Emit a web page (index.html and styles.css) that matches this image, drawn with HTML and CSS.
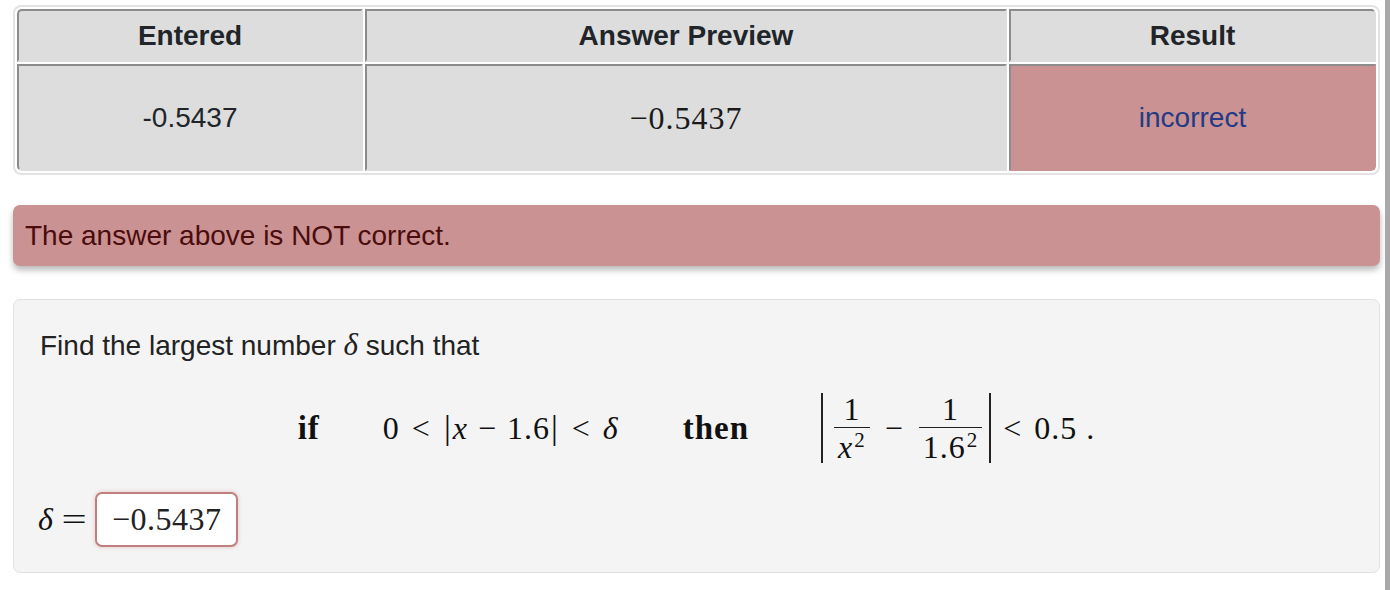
FILE: index.html
```html
<!DOCTYPE html>
<html>
<head>
<meta charset="utf-8">
<link rel="stylesheet" href="styles.css">
</head>
<body>
<div class="page">
  <main class="content">
    <div class="results-wrap">
      <table class="results">
        <thead>
          <tr><th class="c1">Entered</th><th class="c2">Answer Preview</th><th class="c3">Result</th></tr>
        </thead>
        <tbody>
          <tr><td>-0.5437</td><td class="math-cell">−0.5437</td><td class="incorrect">incorrect</td></tr>
        </tbody>
      </table>
    </div>

    <div class="alert">The answer above is NOT correct.</div>

    <div class="problem">
      <p class="prompt">Find the largest number <i class="m-inline">δ</i> such that</p>
      <div class="display">
        <span class="kw kw-if">if</span>
        <span class="expr">0<span class="rel">&lt;</span><span class="bar">|</span><i>x</i><span class="bin">−</span>1.6<span class="bar">|</span><span class="rel">&lt;</span><i>δ</i></span>
        <span class="kw kw-then">then</span>
        <span class="expr">
          <span class="abs">
            <span class="frac"><span class="num">1</span><span class="den"><i>x</i><sup>2</sup></span></span>
            <span class="bin">−</span>
            <span class="frac"><span class="num">1</span><span class="den">1.6<sup>2</sup></span></span>
          </span>
          <span class="rel">&lt;</span>0.5<span class="dot">.</span>
        </span>
      </div>
      <div class="answer-row">
        <span class="ans-label"><i>δ</i><span class="eq">=</span></span>
        <span class="answer-box">−0.5437</span>
      </div>
    </div>
  </main>
  <div class="scroll-strip"></div>
</div>
</body>
</html>
```

FILE: styles.css
```css
html, body {
  margin: 0;
  padding: 0;
  background: #ffffff;
}

body {
  font-family: "Liberation Sans", Arial, sans-serif;
  font-size: 28px;
  color: #212529;
}

.page {
  display: flex;
  width: 1390px;
  height: 590px;
  overflow: hidden;
}

.content {
  flex: 1;
  padding: 5px 5px 0 13px;
  min-width: 0;
}

.scroll-strip {
  width: 5px;
  background: #a9a9a9;
  flex: none;
}

/* results table */
.results-wrap {
  border: 2px solid #e3e3e3;
  border-radius: 8px;
}

.results {
  width: 100%;
  border-collapse: separate;
  border-spacing: 2px;
  table-layout: fixed;
}

.results th,
.results td {
  background: #dddddd;
  border-style: solid;
  border-width: 2px;
  border-color: #8c8c8c #dddddd #dddddd #8c8c8c;
  text-align: center;
  padding: 0;
  box-sizing: border-box;
}

.results th {
  height: 53px;
  font-weight: bold;
  color: #212529;
  line-height: 30px;
}

.results td {
  height: 107px;
  line-height: 30px;
}

.results th.c1 { width: 346px; border-top-left-radius: 5px; }
.results th.c2 { width: 642px; }
.results th.c3 { border-top-right-radius: 5px; }

.results tbody td:first-child { border-bottom-left-radius: 5px; }

.results td.math-cell {
  font-family: "Liberation Serif", "Times New Roman", serif;
  font-size: 32px;
  letter-spacing: 1px;
  color: #1a1a1a;
}

.results td.incorrect {
  background: #ca9292;
  border-color: #8c8c8c #ca9292 #ca9292 #8c8c8c;
  color: #223a86;
  border-bottom-right-radius: 5px;
}

/* alert */
.alert {
  margin-top: 30px;
  background: #ca9292;
  color: #4a0c0c;
  border-radius: 7px;
  padding: 14px 12px 13px;
  line-height: 34px;
  box-shadow: 0 4px 6px rgba(0, 0, 0, 0.28);
}

/* problem */
.problem {
  margin-top: 33px;
  background: #f4f4f4;
  border: 1px solid #e1e1e1;
  border-radius: 7px;
  padding: 28px 26px 25px;
}

.prompt {
  margin: 0;
  line-height: 34px;
  color: #222;
}

.m-inline {
  font-family: "Liberation Serif", "Times New Roman", serif;
  font-size: 31px;
}

.display {
  margin-top: 25px;
  height: 80px;
  display: flex;
  align-items: center;
  justify-content: center;
  font-family: "Liberation Serif", "Times New Roman", serif;
  font-size: 32px;
  letter-spacing: 1px;
  color: #111;
}

.kw {
  font-weight: bold;
}

.kw-if {
  margin-right: 63px;
  font-size: 33px;
}

.kw-then {
  margin: 0 72px 0 64px;
  font-size: 33px;
}

.expr {
  display: inline-flex;
  align-items: center;
  white-space: nowrap;
}

.rel {
  padding: 0 12px;
}

.bin {
  padding: 0 10px;
}

.bar {
  font-size: 34px;
  padding: 0 1px;
}

.abs {
  display: inline-flex;
  align-items: center;
  border-left: 2px solid #222;
  border-right: 2px solid #222;
  height: 70px;
  padding: 0 5px 0 9px;
}

.abs .bin {
  padding: 0 13px;
}

.frac {
  display: inline-flex;
  flex-direction: column;
  align-items: center;
  padding: 0 2px;
}

.num {
  line-height: 30px;
  padding: 0 4px 3px;
  border-bottom: 1.5px solid #222;
  align-self: stretch;
  text-align: center;
}

.den {
  line-height: 30px;
  padding: 4px 4px 0;
}

.den sup {
  font-size: 21px;
  vertical-align: 11px;
  line-height: 0;
  padding-left: 1px;
}

.dot {
  padding-left: 9px;
}

.answer-row {
  margin-top: 24px;
  display: flex;
  align-items: center;
  font-family: "Liberation Serif", "Times New Roman", serif;
  font-size: 32px;
  color: #111;
}

.ans-label {
  margin-left: -2px;
  display: inline-flex;
  align-items: center;
}

.eq {
  padding: 0 6px 0 6px;
  display: inline-block;
  transform: scaleX(1.4);
  transform-origin: left center;
  margin-right: 12px;
}

.answer-box {
  width: 143px;
  height: 55px;
  box-sizing: border-box;
  border: 2px solid #c07f7f;
  border-radius: 7px;
  background: #ffffff;
  box-shadow: 0 0 4px rgba(192, 110, 110, 0.35);
  padding-left: 15px;
  line-height: 51px;
  color: #222;
  letter-spacing: 0.5px;
}
```
